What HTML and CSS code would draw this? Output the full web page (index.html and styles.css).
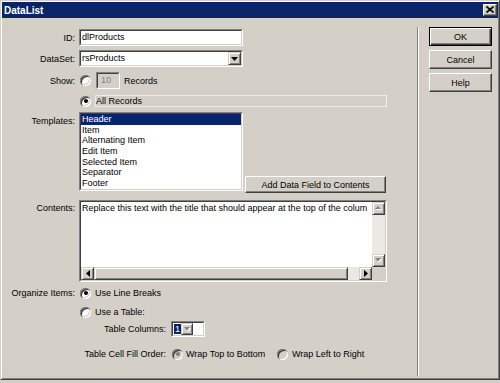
FILE: index.html
```html
<!DOCTYPE html>
<html>
<head>
<meta charset="utf-8">
<title>DataList</title>
<link rel="stylesheet" href="styles.css">
</head>
<body>
<div class="window">
  <div class="titlebar">
    <span class="title">DataList</span>
    <span class="close"><svg width="8" height="7" viewBox="0 0 8 7"><path d="M0.5 0.5 L7.5 6.5 M7.5 0.5 L0.5 6.5" stroke="#000" stroke-width="1.6" fill="none"/></svg></span>
  </div>
  <div class="client">
    <div class="main">
      <div class="row r-id">
        <span class="lbl">ID:</span>
        <div class="sunken field w164"><div class="inner">dlProducts</div></div>
      </div>
      <div class="row r-ds">
        <span class="lbl">DataSet:</span>
        <div class="sunken field w164"><div class="inner sel"><span class="val">rsProducts</span><span class="ddbtn"><svg width="7" height="4" viewBox="0 0 7 4"><path d="M0 0 H7 L3.5 4 Z" fill="#000"/></svg></span></div></div>
      </div>
      <div class="row r-show">
        <span class="lbl">Show:</span>
        <span class="radio"></span>
        <div class="sunken field w24 gap5"><div class="inner disabled">10</div></div>
        <span class="txt gap4">Records</span>
      </div>
      <div class="row r-all">
        <span class="lbl"></span>
        <span class="radio checked"></span>
        <div class="allbox">All Records</div>
      </div>
      <div class="row r-tpl">
        <span class="lbl top tpl-lbl">Templates:</span>
        <div class="sunken listbox"><div class="inner">
          <div class="item selected">Header</div>
          <div class="item">Item</div>
          <div class="item">Alternating Item</div>
          <div class="item">Edit Item</div>
          <div class="item">Selected Item</div>
          <div class="item">Separator</div>
          <div class="item">Footer</div>
        </div></div>
        <div class="btn addbtn">Add Data Field to Contents</div>
      </div>
      <div class="row r-cnt">
        <span class="lbl top cnt-lbl">Contents:</span>
        <div class="sunken memo"><div class="inner">
          <div class="memo-top">
            <div class="memo-text">Replace this text with the title that should appear at the top of the colum</div>
            <div class="vscroll">
              <span class="sbtn"><svg width="7" height="5" viewBox="0 0 7 5"><path d="M1 4 H7 L4 1 Z" fill="#fff"/><path d="M0 3 H6 L3 0 Z" fill="#808080"/></svg></span>
              <span class="track"></span>
              <span class="sbtn"><svg width="7" height="5" viewBox="0 0 7 5"><path d="M1 1 H7 L4 4.5 Z" fill="#fff"/><path d="M0 0 H6 L3 3.5 Z" fill="#808080"/></svg></span>
            </div>
          </div>
          <div class="hscroll">
            <span class="sbtn"><svg width="4" height="7" viewBox="0 0 4 7"><path d="M4 0 V7 L0 3.5 Z" fill="#000"/></svg></span>
            <span class="thumb"></span>
            <span class="track"></span>
            <span class="sbtn"><svg width="4" height="7" viewBox="0 0 4 7"><path d="M0 0 V7 L4 3.5 Z" fill="#000"/></svg></span>
            <span class="corner"></span>
          </div>
        </div></div>
      </div>
      <div class="row r-org">
        <span class="lbl">Organize Items:</span>
        <span class="radio checked"></span>
        <span class="txt gap4">Use Line Breaks</span>
      </div>
      <div class="row r-tbl">
        <span class="lbl"></span>
        <span class="radio"></span>
        <span class="txt gap4">Use a Table:</span>
      </div>
      <div class="row r-cols">
        <span class="lbl sub">Table Columns:</span>
        <div class="sunken colsel"><div class="inner sel light"><span class="hl">1</span><span class="ddbtn small"><svg width="7" height="5" viewBox="0 0 7 5"><path d="M1 1 H7 L4 4.5 Z" fill="#fff"/><path d="M0 0 H6 L3 3.5 Z" fill="#808080"/></svg></span></div></div>
      </div>
      <div class="row r-fill">
        <span class="lbl sub">Table Cell Fill Order:</span>
        <span class="opt opt1"><span class="radio checked dis"></span><span class="txt gap3">Wrap Top to Bottom</span></span>
        <span class="opt"><span class="radio dis"></span><span class="txt gap4">Wrap Left to Right</span></span>
      </div>
    </div>
    <div class="sep"></div>
    <div class="side">
      <div class="btn default">OK</div>
      <div class="btn">Cancel</div>
      <div class="btn">Help</div>
    </div>
  </div>
</div>
</body>
</html>
```

FILE: styles.css
```css
* { box-sizing: border-box; }
html, body { margin: 0; padding: 0; background: #d4d0c8; }
body {
  width: 500px;
  height: 383px;
  overflow: hidden;
  font-family: "Liberation Sans", Arial, sans-serif;
  font-size: 9px;
  color: #000;
}
.window {
  width: 500px;
  height: 380px;
  border: 1px solid;
  border-color: #d4d0c8 #404040 #404040 #d4d0c8;
  box-shadow: inset 1px 1px #fff, inset -1px -1px #808080;
  padding: 1px;
  background: #d4d0c8;
  display: flex;
  flex-direction: column;
}
.titlebar {
  height: 16px;
  flex: none;
  background: #0a246a;
  display: flex;
  align-items: center;
  justify-content: space-between;
  padding: 0 1px 0 1px;
}
.title {
  color: #fff;
  font-weight: bold;
  font-size: 10px;
  padding-left: 1px;
}
.close {
  width: 14px;
  height: 12px;
  background: #d4d0c8;
  border: 1px solid;
  border-color: #fff #404040 #404040 #fff;
  box-shadow: inset -1px -1px #808080;
  display: flex;
  align-items: center;
  justify-content: center;
  padding-bottom: 1px;
}
.client {
  flex: 1;
  display: flex;
}
.main {
  width: 413px;
  flex: none;
  padding-top: 11px;
}
.row {
  display: flex;
  align-items: center;
}
.lbl {
  width: 77px;
  flex: none;
  text-align: right;
  padding-right: 4px;
  white-space: nowrap;
}
.lbl.sub { width: 169px; padding-right: 5px; }
.lbl.top { align-self: flex-start; }
.tpl-lbl { padding-top: 4px; }
.cnt-lbl { padding-top: 3px; }
.txt { white-space: nowrap; }
.gap3 { margin-left: 3px; }
.gap4 { margin-left: 4px; }
.gap5 { margin-left: 5px; }
.opt { display: flex; align-items: center; }
.opt1 { width: 105px; flex: none; }

.r-id { height: 17px; }
.r-ds { height: 17px; margin-top: 4px; }
.r-show { height: 17px; margin-top: 5px; }
.r-all { height: 12px; margin-top: 6px; }
.r-tpl { height: 81px; margin-top: 5px; align-items: flex-start; }
.r-cnt { height: 82px; margin-top: 7px; align-items: flex-start; }
.r-org { height: 12px; margin-top: 5px; }
.r-tbl { height: 12px; margin-top: 7px; }
.r-cols { height: 16px; margin-top: 3px; }
.r-fill { height: 12px; margin-top: 11px; }

/* sunken frame */
.sunken {
  border: 1px solid;
  border-color: #808080 #fff #fff #808080;
  flex: none;
}
.sunken > .inner {
  border: 1px solid;
  border-color: #404040 #d4d0c8 #d4d0c8 #404040;
  background: #fff;
  height: 100%;
  overflow: hidden;
}
.field { height: 17px; }
.field > .inner {
  padding-left: 1px;
  line-height: 13px;
  white-space: nowrap;
}
.w164 { width: 164px; }
.w24 { width: 24px; }
.inner.disabled { background: #d4d0c8; color: #808080; padding-left: 3px; }
.inner.sel {
  display: flex;
  align-items: stretch;
}
.inner.sel .val { flex: 1; }
.ddbtn {
  width: 13px;
  flex: none;
  background: #d4d0c8;
  border: 1px solid;
  border-color: #d4d0c8 #404040 #404040 #d4d0c8;
  box-shadow: inset 1px 1px #fff, inset -1px -1px #808080;
  display: flex;
  align-items: center;
  justify-content: center;
}
.ddbtn.small { width: 12px; margin-left: auto; }

/* radio */
.radio {
  width: 11px;
  height: 11px;
  flex: none;
  margin-left: 1px;
  border-radius: 50%;
  background: #fff;
  position: relative;
  box-shadow: inset 1px 1px #808080, inset -1px -1px #fff, inset 2px 2px #404040, inset -2px -2px #d4d0c8;
}
.radio.dis { background: #d4d0c8; }
.radio.checked::after {
  content: "";
  position: absolute;
  left: 3.5px;
  top: 3.5px;
  width: 4px;
  height: 4px;
  border-radius: 50%;
  background: #000;
}
.radio.checked.dis::after { background: #808080; }

.allbox {
  margin-left: 4px;
  width: 292px;
  height: 12px;
  border: 1px solid #ecebe6;
  border-right-color: #f2f1ee;
  line-height: 10px;
  padding-left: 0;
  white-space: nowrap;
}

/* listbox */
.listbox {
  width: 164px;
  height: 79px;
}
.listbox > .inner { padding: 0; }
.item {
  height: 10.7px;
  line-height: 10.7px;
  padding-left: 1px;
  white-space: nowrap;
}
.item.selected { background: #0a246a; color: #fff; }

/* buttons */
.btn {
  background: #d4d0c8;
  border: 1px solid;
  border-color: #fff #404040 #404040 #fff;
  box-shadow: inset -1px -1px #808080;
  display: flex;
  align-items: center;
  justify-content: center;
  white-space: nowrap;
}
.addbtn {
  width: 141px;
  height: 17px;
  margin-left: 2px;
  align-self: flex-end;
  margin-bottom: 0;
}

/* memo */
.memo {
  width: 308px;
  height: 82px;
}
.memo > .inner {
  display: flex;
  flex-direction: column;
}
.memo-top {
  flex: 1;
  display: flex;
  min-height: 0;
}
.memo-text {
  flex: 1;
  min-width: 0;
  white-space: nowrap;
  overflow: hidden;
  padding: 1px 0 0 1px;
  line-height: 11px;
}
.vscroll {
  width: 13px;
  flex: none;
  display: flex;
  flex-direction: column;
}
.track {
  flex: 1;
  background: #ebe9e4;
}
.sbtn {
  width: 13px;
  height: 13px;
  flex: none;
  background: #d4d0c8;
  border: 1px solid;
  border-color: #d4d0c8 #404040 #404040 #d4d0c8;
  box-shadow: inset 1px 1px #fff, inset -1px -1px #808080;
  display: flex;
  align-items: center;
  justify-content: center;
}
.hscroll {
  height: 13px;
  flex: none;
  display: flex;
}
.thumb {
  width: 254px;
  flex: none;
  background: #d4d0c8;
  border: 1px solid;
  border-color: #d4d0c8 #404040 #404040 #d4d0c8;
  box-shadow: inset 1px 1px #fff, inset -1px -1px #808080;
}
.corner {
  width: 13px;
  flex: none;
  background: #d4d0c8;
}

/* table columns select */
.colsel {
  width: 34px;
  height: 16px;
}
.colsel > .inner { padding: 1px 0 1px 1px; }
.colsel .ddbtn { margin: -1px 0; }
.hl {
  background: #0a246a;
  color: #fff;
  width: 7px;
  line-height: 10px;
  text-align: center;
  align-self: center;
}

/* separator and side */
.sep {
  width: 2px;
  flex: none;
  margin-top: 9px;
  height: 349px;
  margin-left: 2px;
  border-left: 1px solid #808080;
  border-right: 1px solid #fff;
}
.side {
  margin-left: 10px;
  padding-top: 9px;
  display: flex;
  flex-direction: column;
  gap: 4px;
}
.side .btn {
  width: 63px;
  height: 19px;
}
.btn.default {
  border: 1px solid #000;
  box-shadow: inset 1px 1px #fff, inset -1px -1px #404040, inset -2px -2px #808080;
}
```
